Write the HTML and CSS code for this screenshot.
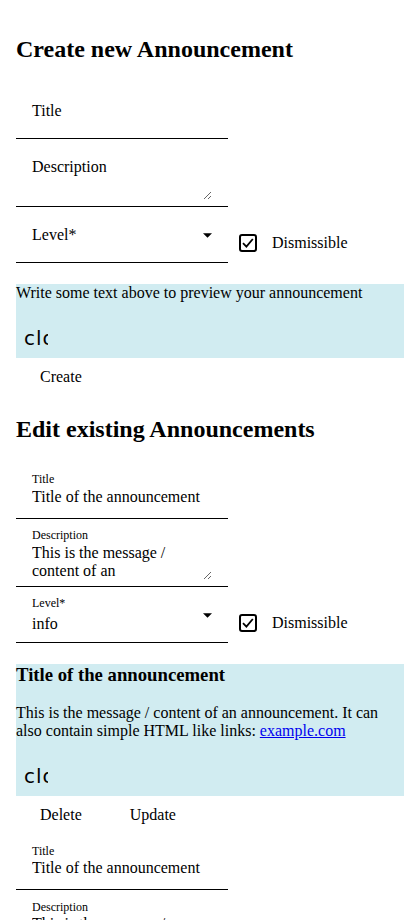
FILE: index.html
```html
<!DOCTYPE html>
<html lang="en">
<head>
<meta charset="utf-8">
<title>Announcements</title>
<link rel="stylesheet" href="styles.css">
</head>
<body>
<div class="page">
  <h2>Create new Announcement</h2>
  <form class="editor">
    <label class="field">
      <span class="label rest">Title</span>
      <input class="input" type="text">
    </label>
    <label class="field area">
      <span class="label rest">Description</span>
      <textarea class="textarea" rows="2"></textarea>
    </label>
    <div class="row">
      <label class="field select">
        <span class="label rest">Level*</span>
        <span class="value"></span>
        <svg class="arrow" width="10" height="5" viewBox="0 0 10 5"><path d="M0 0H10L5 5Z" fill="#000"/></svg>
      </label>
      <label class="check">
        <span class="box"><svg width="18" height="18" viewBox="0 0 18 18"><rect x="1" y="1" width="16" height="16" rx="2" fill="#fff" stroke="#000" stroke-width="2"/><path d="M4 9.2L7.4 12.6L13.8 5" fill="none" stroke="#000" stroke-width="1.8"/></svg></span>
        <span class="check-text">Dismissible</span>
      </label>
    </div>
    <div class="preview">
      <p>Write some text above to preview your announcement</p>
      <span class="close">close</span>
    </div>
    <div class="actions"><button type="button" class="btn">Create</button></div>
  </form>

  <h2>Edit existing Announcements</h2>
  <form class="editor">
    <label class="field">
      <span class="label">Title</span>
      <input class="input" type="text" value="Title of the announcement">
    </label>
    <label class="field area">
      <span class="label">Description</span>
      <textarea class="textarea" rows="2">This is the message / content of an announcement. It can also contain simple HTML like links: <a href="https://example.com">example.com</a></textarea>
    </label>
    <div class="row">
      <label class="field select">
        <span class="label">Level*</span>
        <span class="value">info</span>
        <svg class="arrow" width="10" height="5" viewBox="0 0 10 5"><path d="M0 0H10L5 5Z" fill="#000"/></svg>
      </label>
      <label class="check">
        <span class="box"><svg width="18" height="18" viewBox="0 0 18 18"><rect x="1" y="1" width="16" height="16" rx="2" fill="#fff" stroke="#000" stroke-width="2"/><path d="M4 9.2L7.4 12.6L13.8 5" fill="none" stroke="#000" stroke-width="1.8"/></svg></span>
        <span class="check-text">Dismissible</span>
      </label>
    </div>
    <div class="preview">
      <h3>Title of the announcement</h3>
      <p>This is the message / content of an announcement. It can also contain simple HTML like links: <a href="https://example.com">example.com</a></p>
      <span class="close">close</span>
    </div>
    <div class="actions"><button type="button" class="btn">Delete</button><button type="button" class="btn">Update</button></div>
  </form>

  <form class="editor">
    <label class="field">
      <span class="label">Title</span>
      <input class="input" type="text" value="Title of the announcement">
    </label>
    <label class="field area">
      <span class="label">Description</span>
      <textarea class="textarea" rows="2">This is the message / content of an announcement. It can also contain simple HTML like links: <a href="https://example.com">example.com</a></textarea>
    </label>
    <div class="row">
      <label class="field select">
        <span class="label">Level*</span>
        <span class="value">info</span>
        <svg class="arrow" width="10" height="5" viewBox="0 0 10 5"><path d="M0 0H10L5 5Z" fill="#000"/></svg>
      </label>
      <label class="check">
        <span class="box"><svg width="18" height="18" viewBox="0 0 18 18"><rect x="1" y="1" width="16" height="16" rx="2" fill="#fff" stroke="#000" stroke-width="2"/><path d="M4 9.2L7.4 12.6L13.8 5" fill="none" stroke="#000" stroke-width="1.8"/></svg></span>
        <span class="check-text">Dismissible</span>
      </label>
    </div>
  </form>
</div>
</body>
</html>
```
FILE: styles.css
```css
html, body {
  margin: 0;
  background: #fff;
}
body {
  font-family: "Liberation Serif", "Times New Roman", serif;
  font-size: 16px;
  color: #000;
}
.page {
  padding: 16px 16px 0;
}
h2 {
  font-size: 24px;
  font-weight: bold;
  margin: 0.83em 0;
}
.editor {
  margin: 0;
}
.field {
  position: relative;
  display: block;
  box-sizing: border-box;
  width: 212px;
  height: 56px;
  padding: 25px 16px 12px;
  border-bottom: 1px solid #000;
}
.label {
  position: absolute;
  left: 16px;
  top: 9.5px;
  font-size: 12px;
  line-height: 14px;
  white-space: nowrap;
}
.label.rest {
  top: 18.8px;
  font-size: 16px;
  line-height: 18px;
}
.input {
  display: block;
  box-sizing: border-box;
  width: 100%;
  height: 18px;
  margin: 0;
  padding: 0;
  border: 0;
  background: transparent;
  font: inherit;
  line-height: 18px;
  color: #000;
  outline: none;
}
.field.area {
  height: 68px;
  padding-bottom: 6px;
}
.textarea {
  display: block;
  box-sizing: border-box;
  width: 100%;
  height: 36px;
  margin: 0;
  padding: 0;
  border: 0;
  background: transparent;
  font: inherit;
  line-height: 18px;
  color: #000;
  overflow: hidden;
  resize: vertical;
  outline: none;
}
.field.select {
  padding: 28px 16px 9px;
}
.value {
  display: block;
  height: 18px;
  line-height: 18px;
}
.arrow {
  position: absolute;
  right: 16px;
  top: 26px;
  width: 9px;
  height: 5px;
}
.row {
  display: flex;
  align-items: flex-end;
}
.check {
  display: flex;
  align-items: center;
  height: 40px;
}
.box {
  display: block;
  width: 18px;
  height: 18px;
  padding: 11px;
}
.box svg {
  display: block;
}
.check-text {
  margin-left: 4px;
  line-height: 18px;
}
.preview {
  margin-top: 21px;
  background: #d1ecf1;
}
.preview h3 {
  font-size: 18.72px;
  margin: 1em 0;
}
.preview p {
  margin: 16px 0;
}
.preview a {
  color: #0000ee;
}
.close {
  display: block;
  width: 24px;
  height: 24px;
  padding: 8px 0;
  margin-left: 8px;
  overflow: hidden;
  white-space: nowrap;
  font-family: "DejaVu Sans", sans-serif;
  font-size: 20px;
  line-height: 24px;
  letter-spacing: 1px;
}
.actions {
  display: flex;
  align-items: center;
  height: 38px;
}
.btn {
  height: 36px;
  margin: 0 8px;
  padding: 0 16px;
  border: 0;
  background: transparent;
  font: inherit;
  color: #000;
  cursor: pointer;
}
```
